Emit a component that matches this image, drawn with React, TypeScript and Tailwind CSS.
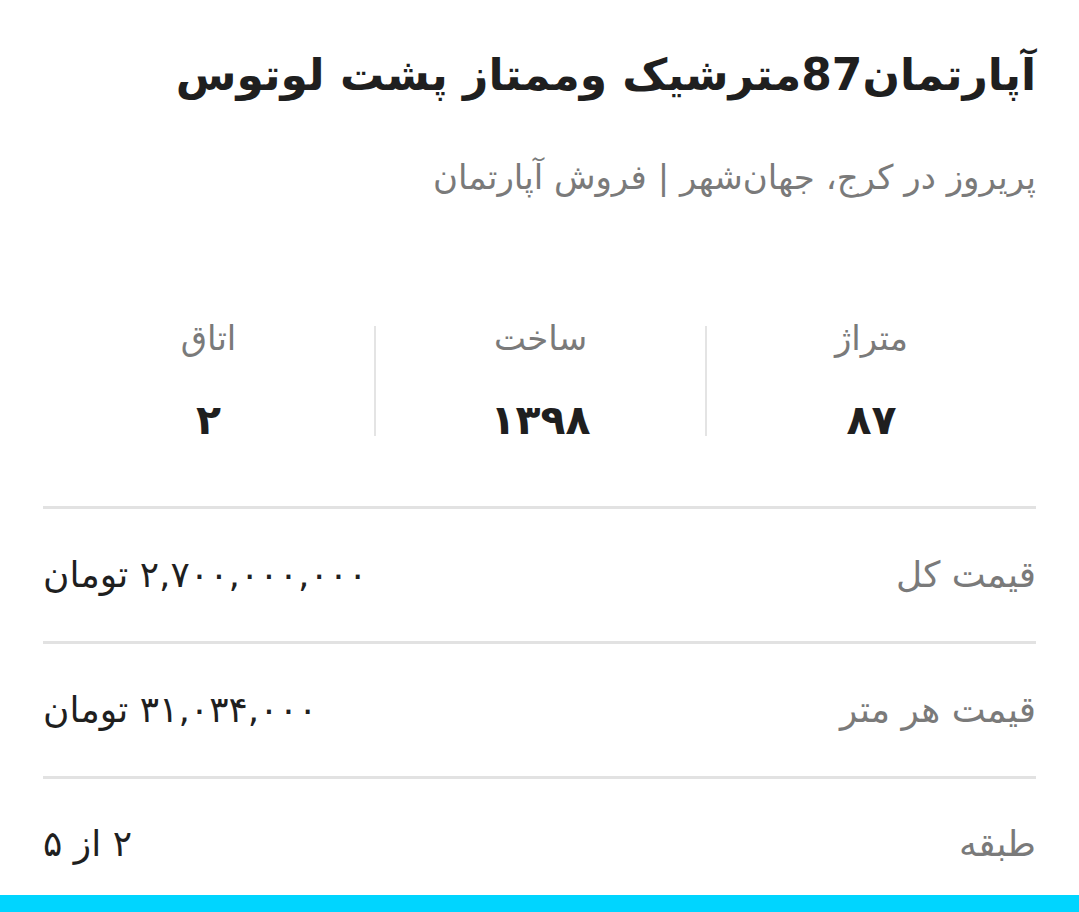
import React from "react";

const STATS = [
  { label: "متراژ", value: "۸۷" },
  { label: "ساخت", value: "۱۳۹۸" },
  { label: "اتاق", value: "۲" },
];

const ROWS = [
  { label: "قیمت کل", value: "۲,۷۰۰,۰۰۰,۰۰۰ تومان" },
  { label: "قیمت هر متر", value: "۳۱,۰۳۴,۰۰۰ تومان" },
  { label: "طبقه", value: "۲ از ۵" },
];

export default function App() {
  return (
    <div
      dir="rtl"
      className="w-[1079px] h-[912px] bg-white flex flex-col overflow-hidden"
      style={{ fontFamily: '"DejaVu Sans", sans-serif' }}
    >
      <div className="flex-1 min-h-0 overflow-hidden px-[43px]">
        {/* Title */}
        <h1 className="pt-[45px] text-[44px] leading-[60px] font-bold text-[#1f1f1f] whitespace-nowrap">
          آپارتمان87مترشیک وممتاز پشت لوتوس
        </h1>
        <p className="mt-[48px] text-[34px] leading-[48px] text-[#7a7a7a] whitespace-nowrap">
          پریروز در کرج، جهان‌شهر | فروش آپارتمان
        </p>

        {/* Stats */}
        <div className="mt-[125px] grid grid-cols-3">
          {STATS.map((s, i) => (
            <div
              key={s.label}
              className={`flex flex-col items-center ${i < 2 ? "border-l-2 border-[#e4e4e4]" : ""}`}
            >
              <span className="-mt-[12px] text-[34px] leading-[48px] text-[#7a7a7a]">{s.label}</span>
              <span className="mt-[32px] -mb-[10px] text-[41px] leading-[52px] font-bold text-[#1f1f1f]">
                {s.value}
              </span>
            </div>
          ))}
        </div>

        {/* Detail rows */}
        <div className="mt-[70px]">
          {ROWS.map((r, i) => (
            <div
              key={r.label}
              className={`border-t-[3px] border-[#e2e2e2] flex items-center justify-between ${
                i === ROWS.length - 1 ? "h-[116px] pt-[16px]" : "h-[135px]"
              }`}
            >
              <span className="text-[36px] text-[#7a7a7a]">{r.label}</span>
              <span className="text-[36px] text-[#1f1f1f]">{r.value}</span>
            </div>
          ))}
        </div>
      </div>

      <div className="h-[17px] shrink-0 bg-[#00d5ff]" />
    </div>
  );
}
